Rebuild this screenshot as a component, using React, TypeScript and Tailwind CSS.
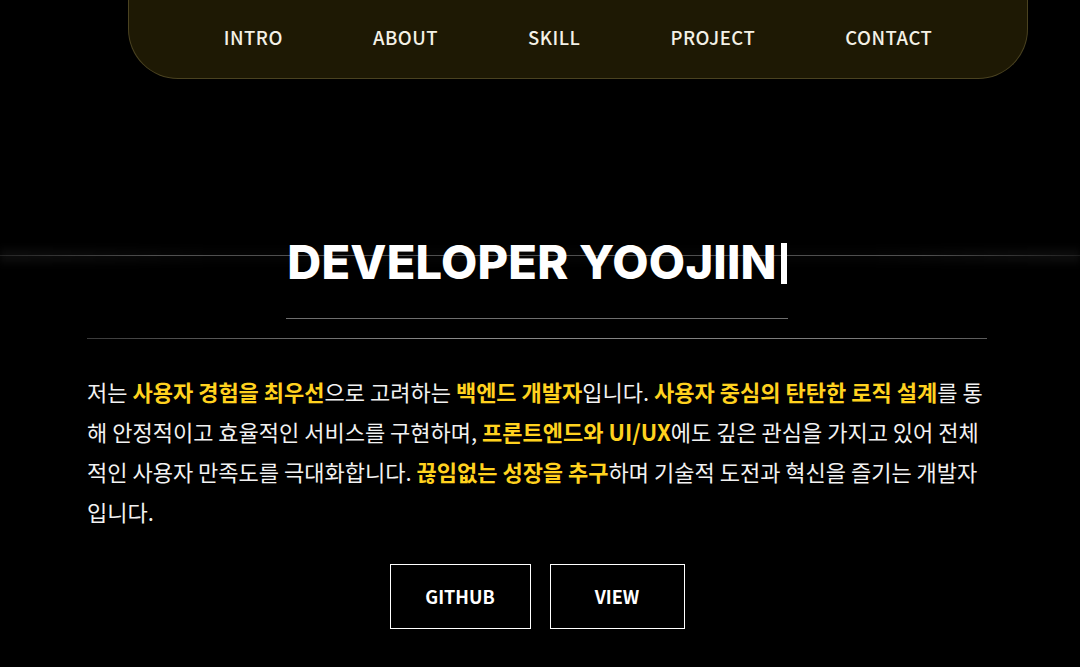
const navItems = ['INTRO', 'ABOUT', 'SKILL', 'PROJECT', 'CONTACT'];

const Hl = ({ children }: { children: React.ReactNode }) => (
	<strong className="font-bold text-[#ffd21f]">{children}</strong>
);

const App = () => {
	return (
		<div className="relative min-h-screen overflow-hidden bg-black font-['Noto_Sans_CJK_KR','Noto_Sans',sans-serif] text-white">
			{/* glow line behind title */}
			<div className="pointer-events-none absolute left-0 top-[250px] h-[12px] w-full bg-[linear-gradient(90deg,rgba(255,255,255,0.06),rgba(255,255,255,0.02)_20%,rgba(255,255,255,0.02)_80%,rgba(255,255,255,0.06))] blur-[4px]" />
			<div className="pointer-events-none absolute left-0 top-[255px] h-px w-full bg-[linear-gradient(90deg,rgba(255,255,255,0.1),rgba(255,255,255,0.3)_15%,rgba(255,255,255,0.3)_85%,rgba(255,255,255,0.08))]" />

			<nav className="ml-[128px] h-[79px] w-[900px] rounded-b-[50px] border-x border-b border-[#4a4220] bg-[#1e1904]">
				<ul className="flex h-full items-center justify-center gap-[90px]">
					{navItems.map(item => (
						<li
							key={item}
							className="mt-[-2px] text-[18.5px] font-medium tracking-[0.5px] text-[#f4f1e6]"
						>
							{item}
						</li>
					))}
				</ul>
			</nav>

			<section className="relative ml-[87px] flex w-[900px] flex-col items-center">
				<div className="mt-[160px] border-b border-[#6e6e6e] px-[1px] pb-[33px]">
					<h1 className="flex items-start font-['Inter',sans-serif] text-[47px] font-extrabold leading-none tracking-[0.2px]">
						<span className="mt-[-1px]">DEVELOPER YOOJIIN</span>
						<span className="ml-[4px] mt-[4px] h-[41px] w-[6px] bg-white" />
					</h1>
				</div>

				<div className="mt-[19px] h-px w-full bg-[linear-gradient(90deg,#3a3a3a,#8a8a8a_40%,#7a7a7a_85%,#5a5a5a)]" />

				<p className="mt-[32px] w-full text-[22px] leading-[40px] text-[#f2f2f2]">
					저는 <Hl>사용자 경험을 최우선</Hl>으로 고려하는{' '}
					<Hl>백엔드 개발자</Hl>입니다.{' '}
					<Hl>사용자 중심의 탄탄한 로직 설계</Hl>를 통해 안정적이고
					효율적인 서비스를 구현하며, <Hl>프론트엔드와 UI/UX</Hl>에도
					깊은 관심을 가지고 있어 전체적인 사용자 만족도를
					극대화합니다. <Hl>끊임없는 성장을 추구</Hl>하며 기술적
					도전과 혁신을 즐기는 개발자입니다.
				</p>

				<div className="mt-[33px] flex gap-[19px]">
					<button className="h-[65px] w-[141px] border border-white text-[18px] font-bold">
						GITHUB
					</button>
					<button className="h-[65px] w-[135px] border border-white text-[18px] font-bold">
						VIEW
					</button>
				</div>
			</section>
		</div>
	);
};

export default App;
